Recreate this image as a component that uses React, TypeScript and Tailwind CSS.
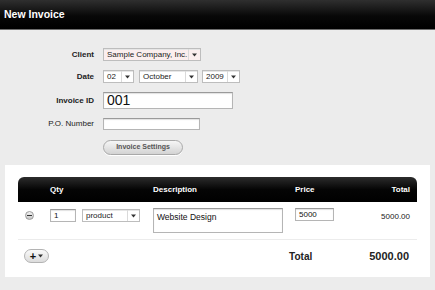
const FONT = { fontFamily: '"Liberation Sans", Arial, sans-serif' };

function Arrow() {
  return (
    <svg width="5" height="4" viewBox="0 0 5 4" className="block">
      <polygon points="0,0.5 5,0.5 2.5,3.5" fill="#333" />
    </svg>
  );
}

function Select({ value, className, bg = 'bg-white' }: { value: string; className: string; bg?: string }) {
  return (
    <div className={`flex h-[13px] items-stretch border border-[#bdbdbd] ${bg} shadow-[inset_0_1px_0_#e6e6e6] ${className}`}>
      <span className="flex flex-1 items-center truncate pl-[3px] text-[8px] text-[#222]">{value}</span>
      <span className="flex w-[12px] items-center justify-center border-l border-[#dadada]">
        <Arrow />
      </span>
    </div>
  );
}

function Field({ value, className, text = 'text-[8px]' }: { value?: string; className: string; text?: string }) {
  return (
    <div
      className={`flex items-center border border-[#b5b5b5] border-t-[#9a9a9a] bg-white pl-[3px] text-[#111] shadow-[inset_0_1px_1px_rgba(0,0,0,0.12)] ${text} ${className}`}
    >
      {value}
    </div>
  );
}

export default function App() {
  return (
    <div style={FONT} className="h-[290px] w-[435px] overflow-hidden bg-[#ececec]">
      {/* Title bar */}
      <div className="flex h-[30px] items-center border-b border-[#6e6e6e] bg-[linear-gradient(to_bottom,#2f2f2f,#080808_55%,#000)] pl-[4px]">
        <h1 className="text-[10.5px] font-bold text-white">New Invoice</h1>
      </div>

      {/* Form */}
      <div className="flex flex-col gap-[9px] pt-[18px]">
        <div className="flex items-center">
          <span className="w-[94px] pr-0 text-right text-[8px] font-bold text-[#222]">Client</span>
          <Select value="Sample Company, Inc." className="ml-[9px] w-[98px]" bg="bg-[#fbeeee]" />
        </div>
        <div className="flex items-center">
          <span className="w-[94px] text-right text-[8px] font-bold text-[#222]">Date</span>
          <div className="ml-[9px] flex gap-[4px]">
            <Select value="02" className="w-[31px]" />
            <Select value="October" className="ml-[1px] w-[59px]" />
            <Select value="2009" className="w-[38px]" />
          </div>
        </div>
        <div className="flex items-center">
          <span className="w-[94px] text-right text-[8px] font-bold text-[#222]">Invoice ID</span>
          <Field value="001" text="text-[14px]" className="ml-[9px] h-[17px] w-[130px]" />
        </div>
        <div className="flex items-center">
          <span className="w-[94px] text-right text-[8px] text-[#222]">P.O. Number</span>
          <Field className="ml-[9px] h-[12px] w-[97px]" />
        </div>
        <div className="flex pl-[103px] pt-[1px]">
          <button className="flex h-[15px] w-[80px] items-center justify-center rounded-full border border-[#a9a9a9] bg-[linear-gradient(to_bottom,#f6f6f6,#d3d3d3)] text-[7px] font-bold text-[#555] shadow-[0_1px_0_#fff]">
            Invoice Settings
          </button>
        </div>
      </div>

      {/* Line items panel */}
      <div className="mx-[5px] mt-[10px] h-[112px] bg-white px-[13px] pt-[12px]">
        <div className="grid h-[25px] grid-cols-[32px_103px_142px_1fr_auto] items-center rounded-t-[6px] bg-[linear-gradient(to_bottom,#2c2c2c,#050505_50%,#000)] text-[8px] font-bold text-white">
          <span />
          <span>Qty</span>
          <span>Description</span>
          <span>Price</span>
          <span className="pr-[7px] text-right">Total</span>
        </div>

        <div className="grid grid-cols-[32px_103px_142px_1fr_auto] items-start border-b border-[#ececec] pb-[6px] pt-[6px]">
          <div className="flex pl-[7px] pt-[3px]">
            <span className="flex h-[9px] w-[9px] items-center justify-center rounded-full border border-[#9b9b9b] bg-[linear-gradient(to_bottom,#f2f2f2,#c8c8c8)]">
              <span className="h-[1.5px] w-[5px] bg-[#333]" />
            </span>
          </div>
          <div className="flex items-center gap-[6px] pt-[1px]">
            <Field value="1" className="h-[13px] w-[26px]" />
            <Select value="product" className="w-[58px]" />
          </div>
          <Field value="Website Design" text="text-[8.5px]" className="h-[25px] w-[130px] !items-start pt-[2px]" />
          <Field value="5000" className="h-[13px] w-[39px]" />
          <span className="pr-[7px] pt-[3px] text-right text-[8px] text-[#222]">5000.00</span>
        </div>

        <div className="flex items-center pt-[8px]">
          <div className="ml-[6px] flex h-[14px] w-[25px] items-center justify-center gap-[2px] rounded-full border border-[#b3b3b3] bg-[linear-gradient(to_bottom,#fafafa,#dcdcdc)]">
            <span className="text-[11px] font-bold leading-none text-[#111]">+</span>
            <Arrow />
          </div>
          <span className="ml-auto text-[10px] font-bold text-[#222]">Total</span>
          <span className="ml-[57px] pr-[8px] text-[11px] font-bold text-[#222]">5000.00</span>
        </div>
      </div>
    </div>
  );
}
